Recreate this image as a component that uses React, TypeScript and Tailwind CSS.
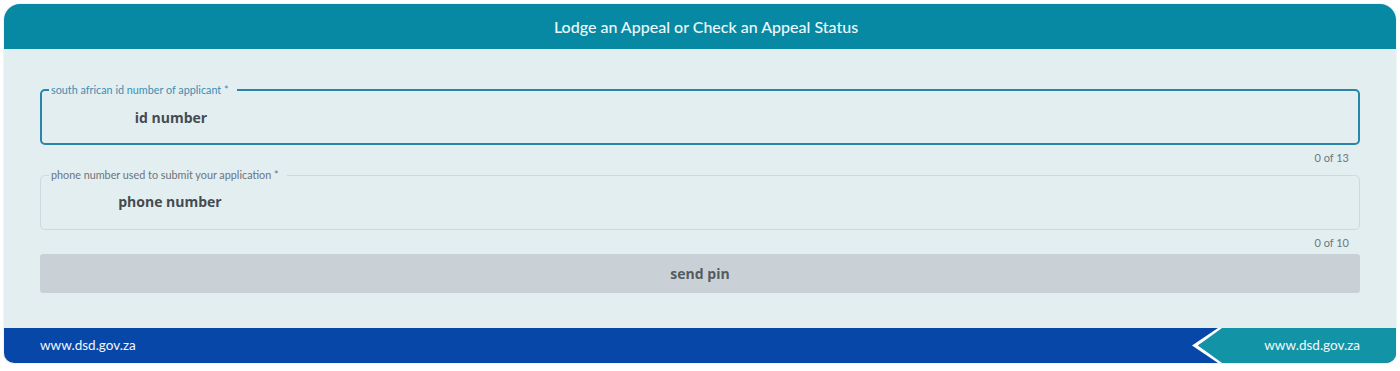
import React from "react";

function Field({
  label,
  placeholder,
  counter,
  active,
}: {
  label: string;
  placeholder: string;
  counter: string;
  active?: boolean;
}) {
  return (
    <div>
      <fieldset
        className={
          active
            ? "h-[61px] rounded-[5px] border-2 border-[#2a86a9] pl-[7px]"
            : "h-[61px] rounded-[5px] border border-[#cfd8dc] pl-[8px]"
        }
      >
        <legend
          className={
            active
              ? "pl-[2px] pr-[8px] text-[10.8px] leading-[12px] text-[#3b8fb3] font-['Lato',sans-serif]"
              : "pl-[2px] pr-[8px] text-[10.8px] leading-[12px] text-[#6b7479] font-['Lato',sans-serif]"
          }
        >
          {label}
        </legend>
        <div
          className={
            active
              ? "w-[258px] -ml-[7px] pt-[11px] text-center text-[14px] font-bold text-[#454b4f] font-['Open_Sans',sans-serif]"
              : "w-[258px] -ml-[8px] pt-[10px] text-center text-[14px] font-bold text-[#454b4f] font-['Open_Sans',sans-serif]"
          }
        >
          {placeholder}
        </div>
      </fieldset>
      <div className="pr-[11px] pt-[6px] text-right text-[11px] leading-[14px] text-[#6f777b] font-['Lato',sans-serif]">
        {counter}
      </div>
    </div>
  );
}

export default function App() {
  return (
    <div className="min-h-screen bg-white p-[4px]">
      <div className="flex h-[359px] flex-col overflow-hidden rounded-t-[16px] rounded-b-[10px] bg-[#e3eef1] shadow-[0_0_0_1px_#eef3f5]">
        <div className="flex h-[45px] shrink-0 items-center justify-center bg-[#0789a3] pl-[12px] text-[16px] font-medium text-[#eef8fa] font-['Lato',sans-serif]">
          Lodge an Appeal or Check an Appeal Status
        </div>

        <div className="flex flex-1 flex-col px-[36px] pt-[35px]">
          <Field
            active
            label="south african id number of applicant *"
            placeholder="id number"
            counter="0 of 13"
          />
          <div className="mt-[4px]">
            <Field
              label="phone number used to submit your application *"
              placeholder="phone number"
              counter="0 of 10"
            />
          </div>
          <button className="mt-[4px] h-[39px] w-full rounded-[3px] bg-[#c9d1d6] text-[14px] font-bold text-[#545b60] font-['Open_Sans',sans-serif]">
            send pin
          </button>
        </div>

        <div className="flex h-[35px] shrink-0 items-stretch bg-[#0747a8]">
          <div className="flex flex-1 items-center pl-[36px] text-[13.5px] text-[#f2f6fb] font-['Lato',sans-serif]">
            www.dsd.gov.za
          </div>
          <div className="flex w-[204px] items-stretch">
            <svg width="32" height="35" viewBox="0 0 32 35" className="shrink-0">
              <polygon points="32,0 26,0 0,17.5 26,35 32,35 6,17.5" fill="#ffffff" />
              <polygon points="32,0 32,35 30,35 6,17.5 30,0" fill="#1294a6" />
            </svg>
            <div className="flex flex-1 items-center justify-end bg-[#1294a6] pr-[36px] text-[13.5px] text-[#f2f9fb] font-['Lato',sans-serif]">
              www.dsd.gov.za
            </div>
          </div>
        </div>
      </div>
    </div>
  );
}
